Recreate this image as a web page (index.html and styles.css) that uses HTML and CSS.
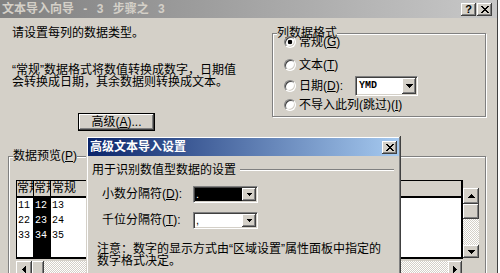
FILE: index.html
```html
<!DOCTYPE html>
<html lang="zh-CN">
<head>
<meta charset="utf-8">
<title>文本导入向导</title>
<link rel="stylesheet" href="styles.css">
</head>
<body>
<div class="dialog">
  <div class="titlebar titlebar-inactive">
    <span class="title">文本导入向导 - 3 步骤之 3</span>
    <div class="caption-buttons">
      <span class="caption-btn">?</span>
      <span class="caption-btn"><svg width="8" height="7" viewBox="0 0 8 7"><path d="M0 0h2v1H0zM6 0h2v1H6zM1 1h2v1H1zM5 1h2v1H5zM2 2h4v1H2zM3 3h2v1H3zM2 4h4v1H2zM1 5h2v1H1zM5 5h2v1H5zM0 6h2v1H0zM6 6h2v1H6z" fill="#000"/></svg></span>
    </div>
  </div>

  <div class="top">
    <div class="intro">
      <p class="prompt">请设置每列的数据类型。</p>
      <p class="note">“常规”数据格式将数值转换成数字，日期值<br>会转换成日期，其余数据则转换成文本。</p>
      <button class="btn">高级(<u>A</u>)...</button>
    </div>
    <fieldset class="group format">
      <legend>列数据格式</legend>
      <div class="option o1"><span class="radio checked"></span>常规(<u>G</u>)</div>
      <div class="option o2"><span class="radio"></span>文本(<u>T</u>)</div>
      <div class="option o3"><span class="radio"></span><span class="date-label">日期(<u>D</u>):</span>
        <span class="combo combo-date"><span class="combo-field ymd">YMD</span><span class="combo-btn"><svg width="7" height="4" viewBox="0 0 7 4"><path d="M0 0h7v1H6v1H5v1H4v1H3V3H2V2H1V1H0z" fill="#000"/></svg></span></span>
      </div>
      <div class="option o4"><span class="radio"></span>不导入此列(跳过)(<u>I</u>)</div>
    </fieldset>
  </div>

  <fieldset class="group preview">
    <legend>数据预览(<u>P</u>)</legend>
    <div class="preview-area">
      <div class="grid-wrap">
        <div class="grid">
          <div class="col col-1">
            <div class="hd">常规</div>
            <div class="cell">11</div>
            <div class="cell">22</div>
            <div class="cell">33</div>
          </div>
          <div class="col col-2">
            <div class="hd">常规</div>
            <div class="cell">12</div>
            <div class="cell">23</div>
            <div class="cell">34</div>
          </div>
          <div class="col col-3">
            <div class="hd hd-pad">常规</div>
            <div class="cell">13</div>
            <div class="cell">24</div>
            <div class="cell">35</div>
          </div>
        </div>
        <div class="hscroll">
          <span class="sb-btn"><svg width="4" height="7" viewBox="0 0 4 7"><path d="M4 0v7H3V6H2V5H1V4H0V3H1V2H2V1H3V0z" fill="#000"/></svg></span>
          <span class="sb-thumb-h"></span>
          <span class="track"></span>
          <span class="sb-btn sb-btn-r"><svg width="4" height="7" viewBox="0 0 4 7"><path d="M0 0h1v1h1v1h1v1h1v1H3v1H2v1H1v1H0z" fill="#000"/></svg></span>
        </div>
      </div>
      <div class="vscroll">
        <span class="sb-btn"><svg width="7" height="4" viewBox="0 0 7 4"><path d="M3 0h1v1h1v1h1v1h1v1H0V3h1V2h1V1h1z" fill="#000"/></svg></span>
        <span class="sb-thumb-v"></span>
        <span class="track"></span>
        <span class="sb-btn sb-btn-d"><svg width="7" height="4" viewBox="0 0 7 4"><path d="M0 0h7v1H6v1H5v1H4v1H3V3H2V2H1V1H0z" fill="#000"/></svg></span>
      </div>
    </div>
  </fieldset>

  <div class="overlay">
    <div class="titlebar titlebar-active">
      <span class="title">高级文本导入设置</span>
      <span class="caption-btn"><svg width="8" height="7" viewBox="0 0 8 7"><path d="M0 0h2v1H0zM6 0h2v1H6zM1 1h2v1H1zM5 1h2v1H5zM2 2h4v1H2zM3 3h2v1H3zM2 4h4v1H2zM1 5h2v1H1zM5 5h2v1H5zM0 6h2v1H0zM6 6h2v1H6z" fill="#000"/></svg></span>
    </div>
    <div class="adv-body">
      <div class="section"><span>用于识别数值型数据的设置</span><span class="rule"></span></div>
      <div class="field-row">
        <span class="field-label">小数分隔符(<u>D</u>):</span>
        <span class="combo combo-sm"><span class="combo-field selected">.</span><span class="combo-btn"><svg width="5" height="3" viewBox="0 0 5 3"><path d="M0 0h5v1H4v1H3v1H2V2H1V1H0z" fill="#000"/></svg></span></span>
      </div>
      <div class="field-row">
        <span class="field-label">千位分隔符(<u>T</u>):</span>
        <span class="combo combo-sm"><span class="combo-field">,</span><span class="combo-btn"><svg width="5" height="3" viewBox="0 0 5 3"><path d="M0 0h5v1H4v1H3v1H2V2H1V1H0z" fill="#000"/></svg></span></span>
      </div>
      <p class="adv-note">注意：数字的显示方式由“区域设置”属性面板中指定的<br>数字格式决定。</p>
    </div>
  </div>
</div>
</body>
</html>
```

FILE: styles.css
```css
* { box-sizing: border-box; }
html, body { margin: 0; padding: 0; }
body {
  width: 500px;
  height: 273px;
  overflow: hidden;
  background: #fff;
  font-family: "Liberation Sans", "Noto Sans CJK SC", sans-serif;
  font-size: 12px;
  line-height: 14px;
  color: #000;
}

.dialog {
  position: relative;
  width: 498px;
  height: 273px;
  background: #d4d0c8;
  border-right: 1px solid #404040;
  overflow: hidden;
}

/* title bars */
.titlebar {
  display: flex;
  align-items: center;
  justify-content: space-between;
  height: 18px;
  padding: 0 5px 0 2px;
}
.titlebar-inactive {
  background: linear-gradient(to right, #808080, #c8c8c8);
  color: #d4d0c8;
}
.titlebar-active {
  background: linear-gradient(to right, #0a246a, #a6caf0);
  color: #fff;
  padding: 0 2px 0 2px;
}
.title {
  font-weight: bold;
  white-space: nowrap;
  word-spacing: 6px;
}
.caption-buttons { display: flex; gap: 1px; }
.caption-btn {
  width: 15px;
  height: 13px;
  display: flex;
  align-items: center;
  justify-content: center;
  background: #d4d0c8;
  box-shadow: inset -1px -1px #404040, inset 1px 1px #fff, inset -2px -2px #808080;
  color: #000;
  font-weight: bold;
  font-size: 11px;
  line-height: 1;
}

/* top section */
.top {
  display: flex;
  align-items: flex-start;
  padding: 8px 0 0 12px;
}
.intro { width: 260px; }
.intro p { margin: 0; white-space: nowrap; }
.intro .note { margin-top: 24px; line-height: 12px; }
.btn {
  display: block;
  width: 77px;
  height: 18px;
  margin: 25px 0 0 66px;
  padding: 0;
  font: inherit;
  line-height: 14px;
  color: #000;
  background: #d4d0c8;
  border: 1px solid #000;
  box-shadow: inset -1px -1px #404040, inset 1px 1px #fff, inset -2px -2px #808080;
}

/* group boxes */
.group {
  margin: 0;
  min-width: 0;
  border: 1px solid #808080;
  box-shadow: inset 1px 1px #fff, 1px 1px #fff;
}
.group legend {
  padding: 0;
  line-height: 14px;
  background: #d4d0c8;
  white-space: nowrap;
}
.format {
  width: 214px;
  margin-top: 2px;
  padding: 0 4px 4px 4px;
}
.format legend { line-height: 10px; height: 10px; }
.option {
  display: flex;
  align-items: center;
  height: 14px;
  margin-left: 7px;
  white-space: nowrap;
}
.o1 { height: 8px; line-height: 8px; }
.o2 { margin-top: 12px; }
.o3 { height: 20px; margin-top: 4px; }
.o4 { margin-top: 2px; }

.radio {
  width: 12px;
  height: 12px;
  margin-right: 3px;
  border-radius: 50%;
  background: #fff;
  border: 1px solid;
  border-color: #808080 #fff #fff #808080;
  box-shadow: inset 1px 1px #404040, inset -1px -1px #d4d0c8;
  flex: none;
}
.radio.checked {
  background: radial-gradient(circle, #000 0 2px, #fff 2.6px);
}
.date-label { display: inline-block; width: 56px; }

/* combo boxes */
.combo {
  display: flex;
  height: 17px;
  padding: 1px;
  background: #fff;
  border: 1px solid;
  border-color: #808080 #fff #fff #808080;
  box-shadow: inset 1px 1px #404040, inset -1px -1px #d4d0c8;
  flex: none;
}
.combo-field {
  flex: 1;
  padding-left: 1px;
  overflow: hidden;
  font-size: 11px;
  line-height: 12px;
}
.combo-field.selected { background: #000; color: #fff; }
.combo-btn {
  width: 14px;
  display: flex;
  align-items: center;
  justify-content: center;
  background: #d4d0c8;
  box-shadow: inset -1px -1px #404040, inset 1px 1px #fff, inset -2px -2px #808080;
}
.combo-sm { width: 65px; }
.combo-date { width: 63px; height: 20px; }
.ymd {
  font: bold 10px/16px "Liberation Mono", monospace;
  padding-left: 2px;
}

/* preview */
.preview {
  width: 478px;
  margin: 18px 0 0 8px;
  padding: 0 0 0 4px;
}
.preview-area {
  display: flex;
  align-items: flex-start;
  margin: 17px 0 0 3px;
}
.grid-wrap { width: 447px; }
.grid {
  display: flex;
  height: 79px;
  background: #fff;
  border: solid #000;
  border-width: 1px 2px 2px 1px;
  overflow: hidden;
}
.col {
  display: flex;
  flex-direction: column;
  border-right: 1px solid #000;
  overflow: hidden;
}
.col-1 { width: 17px; }
.col-2 { width: 17px; background: #000; color: #fff; }
.col-3 { flex: 1; border-right: 0; }
.hd {
  height: 17px;
  line-height: 15px;
  background: #d4d0c8;
  color: #000;
  border-bottom: 2px solid #000;
  overflow: hidden;
  white-space: nowrap;
}
.hd-pad { padding-left: 1px; }
.cell {
  height: 15px;
  padding-left: 1px;
  font: 10px/15px "Liberation Mono", monospace;
}

.hscroll {
  display: flex;
  width: 446px;
  height: 16px;
  margin-top: 2px;
}
.vscroll {
  display: flex;
  flex-direction: column;
  width: 16px;
  height: 70px;
  margin-top: 8px;
}
.sb-btn {
  width: 16px;
  height: 16px;
  display: flex;
  align-items: center;
  justify-content: center;
  background: #d4d0c8;
  box-shadow: inset -1px -1px #404040, inset 1px 1px #fff, inset -2px -2px #808080;
  flex: none;
}
.sb-btn-r { width: 14px; }
.sb-btn-d { height: 13px; }
.sb-thumb-h, .sb-thumb-v {
  background: #d4d0c8;
  box-shadow: inset -1px -1px #404040, inset 1px 1px #fff, inset -2px -2px #808080;
  flex: none;
}
.sb-thumb-h { width: 12px; }
.sb-thumb-v { height: 15px; }
.track {
  flex: 1;
  background: repeating-conic-gradient(#fff 0 25%, #d4d0c8 0 50%) 0 0 / 2px 2px;
}

/* overlay dialog */
.overlay {
  position: absolute;
  left: 86px;
  top: 136px;
  width: 315px;
  height: 150px;
  padding: 2px;
  background: #d4d0c8;
  box-shadow: inset -1px -1px #404040, inset 1px 1px #d4d0c8, inset -2px -2px #808080, inset 2px 2px #fff;
  z-index: 2;
}
.adv-body { padding: 7px 5px 0 4px; }
.section {
  display: flex;
  align-items: center;
  white-space: nowrap;
}
.rule {
  flex: 1;
  height: 2px;
  margin-left: 4px;
  border-top: 1px solid #808080;
  border-bottom: 1px solid #fff;
}
.field-row {
  display: flex;
  align-items: center;
  height: 18px;
  margin-top: 8px;
  padding-left: 10px;
  white-space: nowrap;
}
.field-label { width: 91px; }
.adv-note {
  margin: 14px 0 0 0;
  padding-left: 5px;
  line-height: 12px;
  white-space: nowrap;
}
```
